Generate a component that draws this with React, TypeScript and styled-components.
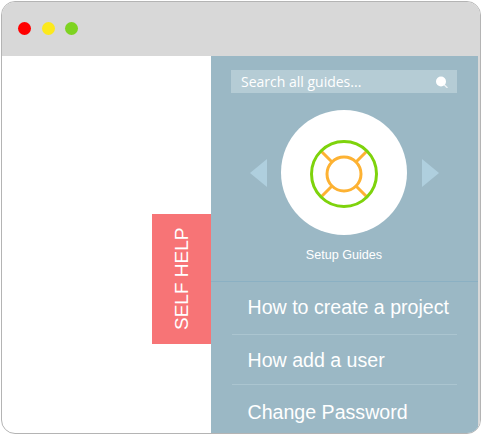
import styled, { createGlobalStyle } from "styled-components";

/**
 * Styled Components
 */

const GlobalStyle = createGlobalStyle`
  html, body {
    background: #fff;
    margin: 0;
    padding: 0;
  }
`;

const Frame = styled.div`
  background: #fff;
  border: 1px solid #b4b4b4;
  border-radius: 14px;
  box-sizing: border-box;
  display: flex;
  flex-direction: column;
  height: 433px;
  margin: 1px 0 0 1px;
  overflow: hidden;
  width: 480px;
`;

const TitleBar = styled.div`
  align-items: center;
  background: #d8d8d8;
  box-sizing: border-box;
  display: flex;
  flex: none;
  gap: 10.5px;
  height: 54px;
  padding: 0 0 2px 16px;
`;

const Dot = styled.span<{ $color: string }>`
  background: ${({ $color }) => $color};
  border-radius: 50%;
  height: 13px;
  width: 13px;
`;

const Content = styled.div`
  border-right: 2px solid #d8d8d8;
  display: flex;
  flex: 1;
  min-height: 0;
`;

const Canvas = styled.div`
  display: flex;
  flex: none;
  justify-content: flex-end;
  padding-top: 158px;
  width: 209px;
`;

const SelfHelpTab = styled.div`
  align-items: center;
  background: #f77476;
  color: #fff;
  display: flex;
  font-family: "Liberation Sans", Arial, sans-serif;
  font-size: 19px;
  height: 130px;
  justify-content: center;
  padding-right: 1px;
  box-sizing: border-box;
  transform: rotate(180deg);
  width: 59px;
  writing-mode: vertical-rl;
`;

const Panel = styled.div`
  background: #9bb8c5;
  display: flex;
  flex: 1;
  flex-direction: column;
  min-width: 0;
  padding-top: 14px;

  & > * {
    flex: none;
  }
`;

const SearchBar = styled.div`
  align-items: center;
  background: #b5ccd5;
  color: #fff;
  display: flex;
  font-family: "Open Sans", sans-serif;
  font-size: 14px;
  height: 23px;
  justify-content: space-between;
  margin: 0 21px 0 20px;
  padding: 0 9px 0 10px;
`;

const Carousel = styled.div`
  align-items: center;
  display: flex;
  gap: 14.5px;
  justify-content: center;
  margin-top: 17px;
  padding-right: 1px;
`;

const GuideCircle = styled.div`
  align-items: center;
  background: #fff;
  border-radius: 50%;
  box-sizing: border-box;
  display: flex;
  height: 125px;
  justify-content: center;
  padding: 2px 1px 0 0;
  width: 126px;
`;

const Arrow = styled.button<{ $direction: "left" | "right" }>`
  background: none;
  border-style: solid;
  border-color: transparent;
  border-width: 14.5px 0 14.5px 17.5px;
  border-left-color: #afcfde;
  height: 0;
  padding: 0;
  transform: ${({ $direction }) => ($direction === "left" ? "rotate(180deg)" : "none")};
  width: 0;
`;

const GuideLabel = styled.div`
  border-bottom: 1px solid #8bb0c3;
  box-sizing: border-box;
  color: #fff;
  font-family: "Liberation Sans", Arial, sans-serif;
  font-size: 12.6px;
  height: 47px;
  line-height: 14px;
  padding: 13px 1px 0 0;
  text-align: center;
`;

const GuideList = styled.ul`
  list-style: none;
  margin: 0;
  padding: 0 21px;
`;

const GuideItem = styled.li`
  border-bottom: 1px solid #abc5d0;
  box-sizing: border-box;
  color: #fff;
  font-family: "Liberation Sans", Arial, sans-serif;
  font-size: 19.6px;
  height: 50px;
  line-height: 50px;
  padding-left: 15.5px;
  white-space: nowrap;

  &:first-child {
    height: 53px;
    line-height: 51px;
  }

  &:last-child {
    border-bottom: 0;
    height: 48px;
    line-height: 55px;
  }
`;

/**
 * Icons
 */

const SearchIcon = () => (
  <svg width="12" height="12" viewBox="0 0 12 12">
    <circle cx="5" cy="5.500" r="5" fill="#fff" />
    <path d="M8.500 9l2.500 2.500" stroke="#fff" strokeWidth="1.5" strokeLinecap="round" opacity="0.7" />
  </svg>
);

const LifebuoyIcon = () => (
  <svg width="68" height="68" viewBox="0 0 68 68">
    <g stroke="#fdb233" strokeWidth="3" fill="none">
      <path d="M11 11l11.500 11.500M57 11L45.500 22.500M11 57l11.500-11.500M57 57L45.500 45.500" />
      <circle cx="34" cy="34" r="17" />
    </g>
    <circle cx="34" cy="34" r="32.500" stroke="#7ed30c" strokeWidth="3" fill="none" />
  </svg>
);

/**
 * App Component
 */

const guides = ["How to create a project", "How add a user", "Change Password"];

const App = () => (
  <>
    <GlobalStyle />
    <Frame>
      <TitleBar>
        <Dot $color="#ff0000" />
        <Dot $color="#fce91c" />
        <Dot $color="#7ed321" />
      </TitleBar>
      <Content>
        <Canvas>
          <SelfHelpTab>SELF HELP</SelfHelpTab>
        </Canvas>
        <Panel>
          <SearchBar>
            Search all guides...
            <SearchIcon />
          </SearchBar>
          <Carousel>
            <Arrow $direction="left" aria-label="Previous" />
            <GuideCircle>
              <LifebuoyIcon />
            </GuideCircle>
            <Arrow $direction="right" aria-label="Next" />
          </Carousel>
          <GuideLabel>Setup Guides</GuideLabel>
          <GuideList>
            {guides.map((guide) => (
              <GuideItem key={guide}>{guide}</GuideItem>
            ))}
          </GuideList>
        </Panel>
      </Content>
    </Frame>
  </>
);

export default App;
